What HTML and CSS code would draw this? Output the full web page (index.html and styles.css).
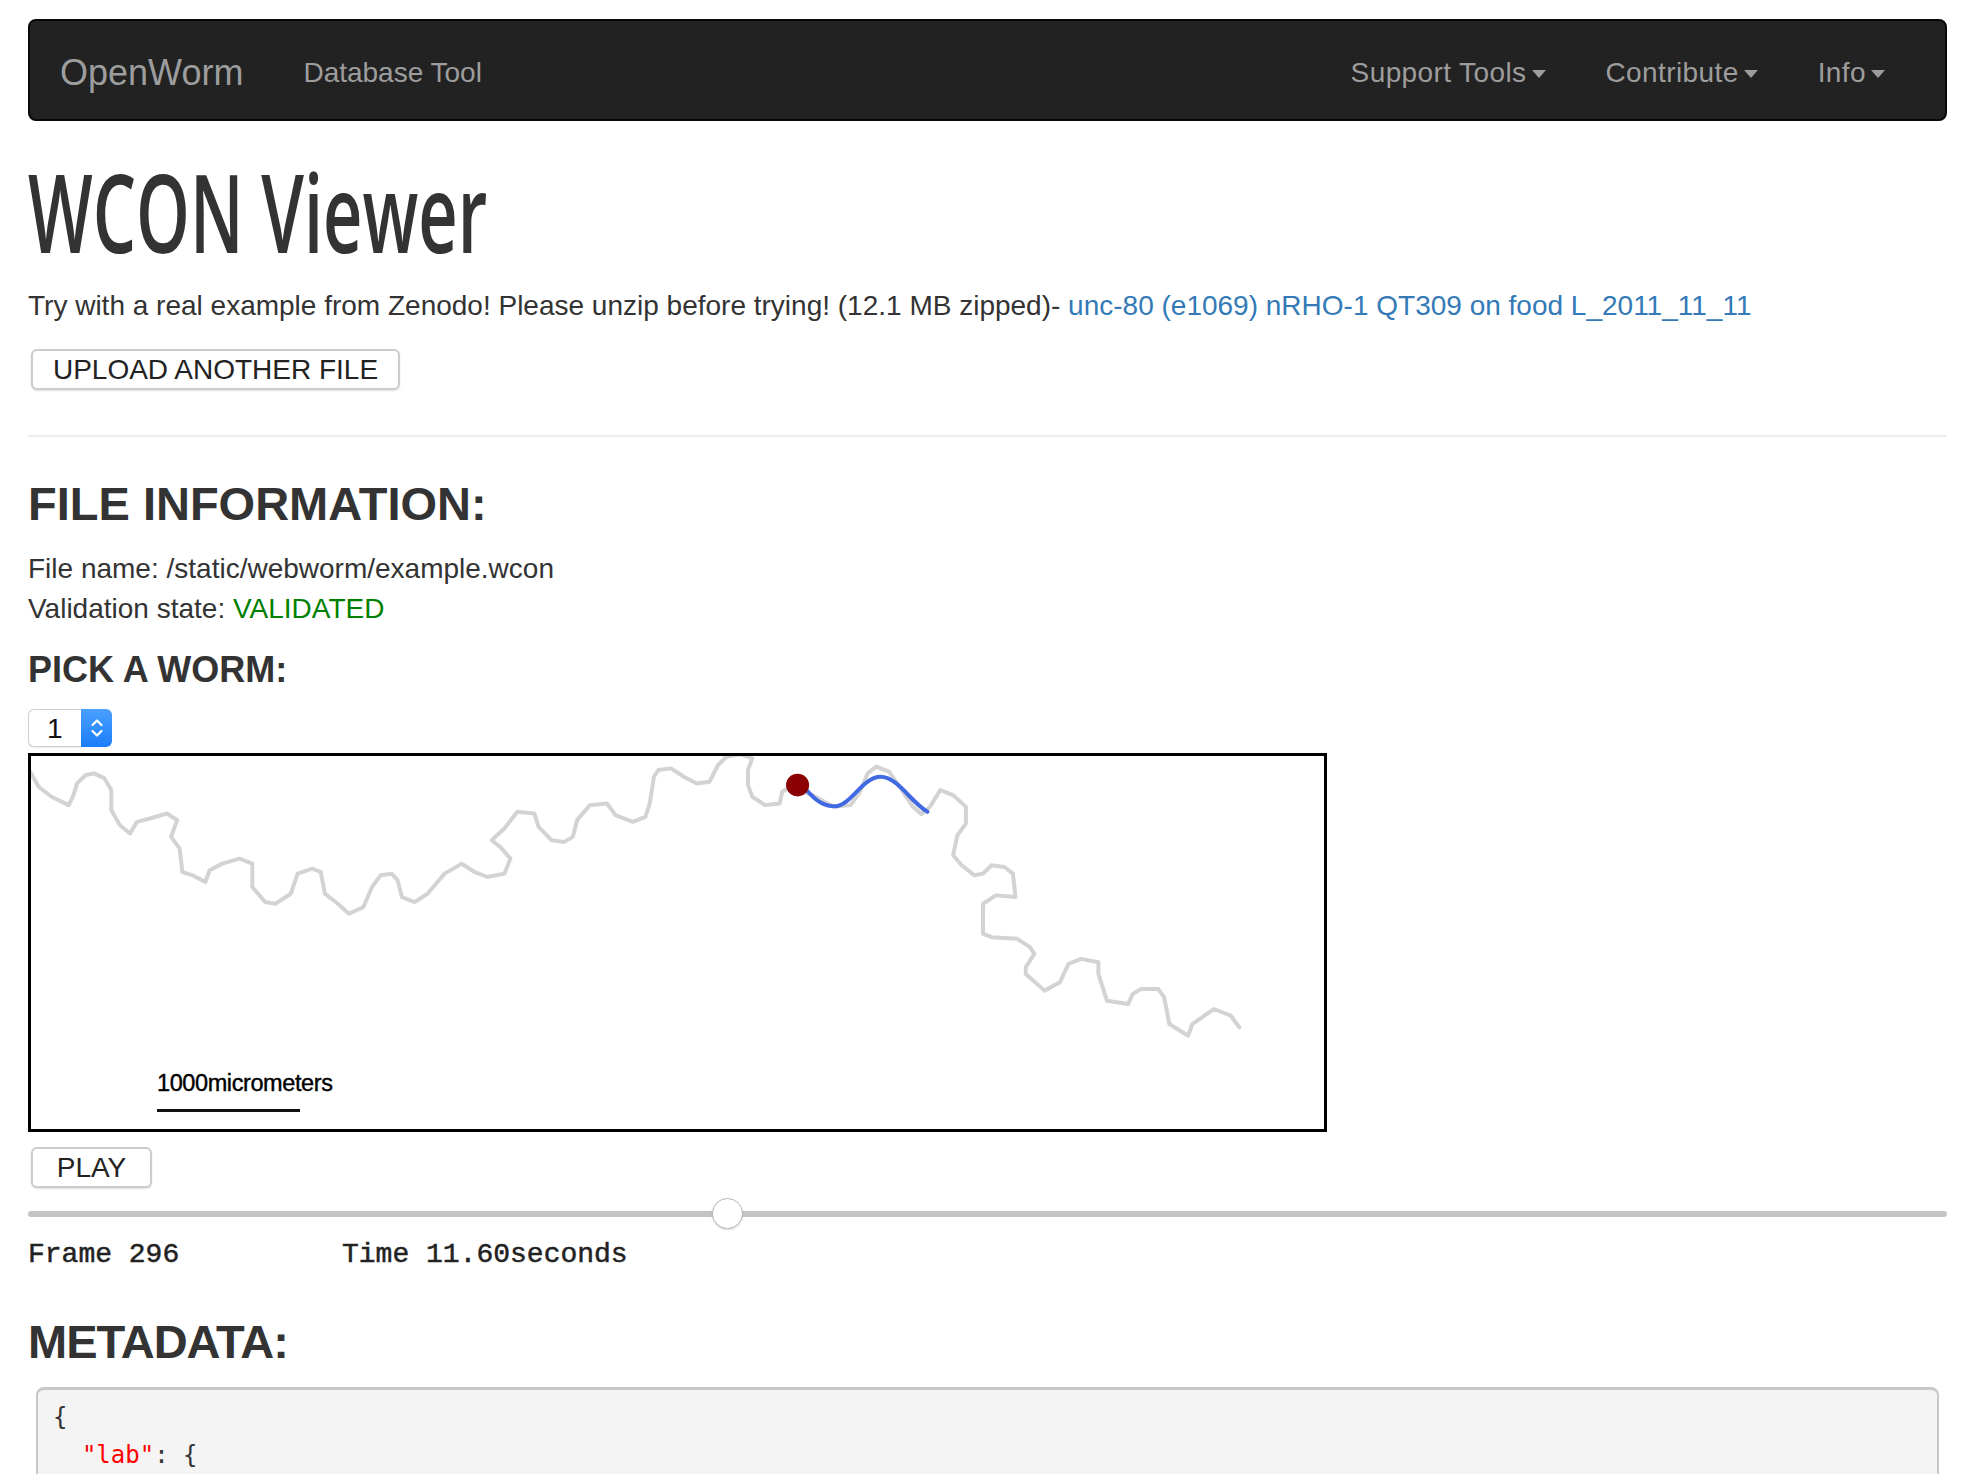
FILE: index.html
```html
<!DOCTYPE html>
<html lang="en">
<head>
<meta charset="utf-8">
<title>WCON Viewer</title>
<link rel="stylesheet" href="styles.css">
</head>
<body>
<nav class="navbar">
  <div class="nav-left">
    <a class="brand">OpenWorm</a>
    <a class="nav-link">Database Tool</a>
  </div>
  <ul class="nav-right">
    <li class="nav-link">Support Tools<span class="caret"></span></li>
    <li class="nav-link">Contribute<span class="caret"></span></li>
    <li class="nav-link">Info<span class="caret"></span></li>
  </ul>
</nav>
<main class="page">
  <h1 class="title"><span>WCON Viewer</span></h1>
  <p class="intro">Try with a real example from Zenodo! Please unzip before trying! (12.1 MB zipped)- <a class="link">unc-80 (e1069) nRHO-1 QT309 on food L_2011_11_11</a></p>
  <button class="btn upload">UPLOAD ANOTHER FILE</button>
  <hr class="divider">
  <h2 class="section first">FILE INFORMATION:</h2>
  <div class="info">File name: /static/webworm/example.wcon</div>
  <div class="info">Validation state: <span class="ok">VALIDATED</span></div>
  <h4 class="pick">PICK A WORM:</h4>
  <div class="select">
    <div class="sel-value">1</div>
    <div class="sel-arrows">
      <svg width="14" height="24" viewBox="0 0 14 24"><path d="M2.5 9 L7 4.5 L11.5 9 M2.5 15 L7 19.5 L11.5 15" fill="none" stroke="#fff" stroke-width="2.2" stroke-linecap="round" stroke-linejoin="round"/></svg>
    </div>
  </div>
  <div class="canvas">
    <svg class="worm" width="1293" height="373" viewBox="36 48 1513 1116" preserveAspectRatio="none">
      <polyline fill="none" stroke="#d3d3d3" stroke-width="4" stroke-linejoin="round" stroke-linecap="round" vector-effect="non-scaling-stroke" points="35,95 45,140 60,170 80,195 85,170 90,130 100,105 110,100 122,115 130,150 130,210 140,255 152,280 160,245 175,235 195,220 207,240 200,290 210,325 213,395 225,405 240,425 245,390 260,370 280,355 295,370 295,440 310,485 322,490 340,460 348,400 365,385 375,395 380,460 395,490 408,520 425,500 435,440 445,405 458,400 465,420 470,470 485,485 500,460 520,400 540,370 555,395 570,410 590,400 597,355 585,320 575,300 590,265 605,215 625,220 630,260 645,300 660,305 670,290 675,240 690,195 710,190 720,225 740,245 755,230 760,190 765,110 770,90 785,85 800,110 815,130 830,125 840,75 850,50 865,42 880,55 875,90 875,135 880,170 895,195 912,190 915,155 925,140 950,165 975,200 995,195 1005,160 1015,100 1025,80 1040,95 1055,150 1068,200 1078,222 1088,200 1100,150 1115,165 1130,200 1130,250 1120,285 1115,345 1125,375 1140,405 1150,400 1160,375 1175,380 1185,400 1188,470 1165,465 1150,490 1150,580 1160,590 1190,595 1205,620 1210,640 1200,680 1200,700 1222,750 1240,725 1250,670 1265,655 1285,665 1285,700 1295,780 1320,790 1325,760 1335,745 1355,745 1362,770 1368,850 1390,885 1395,850 1420,805 1440,825 1450,860"/>
      <path d="M942,145 C955,185 965,200 978,198 C995,195 1010,110 1030,110 C1050,110 1065,185 1085,215" fill="none" stroke="#4169e1" stroke-width="4" stroke-linecap="round" vector-effect="non-scaling-stroke"/>
      <ellipse cx="933" cy="135" rx="13.5" ry="34" fill="#8b0000"/>
    </svg>
    <div class="scalebar">
      <div class="scale-label">1000micrometers</div>
      <div class="scale-line"></div>
    </div>
  </div>
  <button class="btn play">PLAY</button>
  <div class="slider">
    <div class="track"></div>
    <div class="thumb"></div>
  </div>
  <div class="frame-info"><span class="frame">Frame 296</span><span class="time">Time 11.60seconds</span></div>
  <h2 class="section meta">METADATA:</h2>
  <pre class="json">{
  <span class="key">"lab"</span>: {
</pre>
</main>
</body>
</html>
```

FILE: styles.css
```css
* { box-sizing: border-box; }
html, body { margin: 0; padding: 0; background: #fff; }
body {
  font-family: "Liberation Sans", Arial, sans-serif;
  font-size: 28px;
  line-height: 40px;
  color: #333;
  overflow: hidden;
}

/* navbar */
.navbar {
  margin: 19px 27px 0 28px;
  height: 102px;
  background: #222;
  border: 2px solid #080808;
  border-radius: 8px;
  display: flex;
  align-items: center;
  justify-content: space-between;
  padding: 5px 60px 0 30px;
}
.nav-left { display: flex; align-items: center; }
.brand { font-size: 36px; color: #9d9d9d; margin-right: 60px; }
.nav-link { font-size: 28px; color: #9d9d9d; }
.nav-right {
  list-style: none;
  margin: 0;
  padding: 0;
  display: flex;
  gap: 60px;
}
.nav-right .nav-link { letter-spacing: 0.4px; }
.caret {
  display: inline-block;
  width: 0;
  height: 0;
  border-top: 8px solid #9d9d9d;
  border-left: 7px solid transparent;
  border-right: 7px solid transparent;
  margin-left: 5px;
  vertical-align: middle;
}

/* page */
.page { padding: 0 27px 0 28px; }

.title {
  margin: 35px 0 0;
  font-family: "Open Sans", sans-serif;
  font-weight: 600;
  font-size: 109px;
  line-height: 110px;
  color: #333;
  white-space: nowrap;
}
.title span {
  display: inline-block;
  transform: scaleX(0.628);
  transform-origin: 0 50%;
}

.intro { margin: 20px 0 0; white-space: nowrap; }
.link { color: #337ab7; text-decoration: none; }

.btn {
  display: block;
  font-family: "Liberation Sans", Arial, sans-serif;
  font-size: 28px;
  color: #222;
  background: #fff;
  border: 2px solid #ccc;
  border-radius: 6px;
  box-shadow: 0 1px 2px rgba(0,0,0,0.12);
  padding: 0;
  height: 41px;
  line-height: 37px;
  margin-left: 3px;
  white-space: nowrap;
  text-align: center;
}
.upload { margin-top: 23px; width: 369px; }

.divider {
  margin: 45px 0 0;
  border: 0;
  border-top: 2px solid #eee;
  height: 0;
}

.section {
  font-size: 47px;
  line-height: 50px;
  font-weight: bold;
  color: #333;
  margin: 0;
}
.section.first { margin-top: 42px; }
.info { margin: 0; }
.section.first + .info { margin-top: 20px; }
.ok { color: #008000; }

.pick {
  margin: 20.5px 0 0;
  font-size: 36px;
  line-height: 40px;
  font-weight: bold;
  color: #333;
}

/* select */
.select {
  margin-top: 19.5px;
  display: flex;
  width: 84px;
  height: 38px;
}
.sel-value {
  width: 53px;
  height: 38px;
  border: 1px solid #cfcfcf;
  border-right: 0;
  border-radius: 6px 0 0 6px;
  background: #fff;
  color: #111;
  font-size: 28px;
  line-height: 37px;
  padding-left: 18px;
  box-shadow: 0 1px 1px rgba(0,0,0,0.08);
}
.sel-arrows {
  width: 31px;
  height: 38px;
  border-radius: 0 6px 6px 0;
  background: linear-gradient(#4aa0ff, #1a7df8);
  display: flex;
  align-items: center;
  justify-content: center;
}

/* canvas */
.canvas {
  position: relative;
  margin-top: 6px;
  width: 1299px;
  height: 379px;
  border: 3px solid #000;
  background: #fff;
}
.worm { display: block; }
.scalebar {
  position: absolute;
  left: 126px;
  top: 313px;
}
.scale-label {
  font-size: 23.5px;
  line-height: 28px;
  color: #000;
  letter-spacing: -0.4px;
  -webkit-text-stroke: 0.4px #000;
}
.scale-line {
  margin-top: 12px;
  width: 143px;
  height: 3px;
  background: #111;
}

.play { margin-top: 15px; width: 121px; }

/* slider */
.slider {
  position: relative;
  margin-top: 9px;
  height: 33px;
  display: flex;
  align-items: center;
}
.track {
  flex: 1;
  height: 6px;
  border-radius: 3px;
  background: #c4c4c4;
}
.thumb {
  position: absolute;
  left: 684px;
  top: 1px;
  width: 31px;
  height: 31px;
  border-radius: 50%;
  background: #fff;
  border: 1px solid #b9b9b9;
  box-shadow: 0 1px 2px rgba(0,0,0,0.15);
}

.frame-info {
  margin-top: 5px;
  font-family: "Liberation Mono", "Courier New", monospace;
  font-size: 28px;
  line-height: 40px;
  color: #222;
  -webkit-text-stroke: 0.5px #222;
  display: flex;
}
.frame { width: 314px; }

.section.meta { margin-top: 42px; letter-spacing: -1px; }

.json {
  margin: 20px 8px 0 8px;
  background: #f4f4f4;
  border: 2px solid #c8c8c8;
  border-top-width: 3px;
  border-radius: 8px;
  padding: 8px 15px 40px;
  font-family: "DejaVu Sans Mono", Menlo, monospace;
  font-size: 24px;
  line-height: 38px;
  color: #333;
  height: 200px;
}
.key { color: #f00; }
```
